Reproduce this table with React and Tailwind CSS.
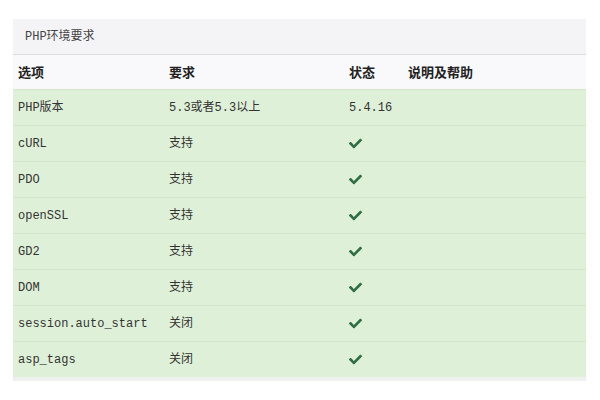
import React from "react";
import { FaCheck } from "react-icons/fa";

const rows = [
  ["PHP版本", "5.3或者5.3以上", "5.4.16"],
  ["cURL", "支持", true],
  ["PDO", "支持", true],
  ["openSSL", "支持", true],
  ["GD2", "支持", true],
  ["DOM", "支持", true],
  ["session.auto_start", "关闭", true],
  ["asp_tags", "关闭", true],
];

const font = { fontFamily: '"Liberation Mono", "Noto Sans CJK SC", monospace' };

export default function App() {
  return (
    <div className="w-[600px] h-[400px] bg-white pt-[19px] pl-[13px]" style={font}>
      <div className="w-[573px] text-[#333]">
        <div className="h-[36px] bg-[#f4f4f6] border-b border-[#dcdcde] flex items-center pl-[12px] text-[12px] text-[#444]">
          PHP环境要求
        </div>
        <div className="h-[34px] bg-[#f9f9fb] grid grid-cols-[151px_180px_59px_1fr] items-center text-[13px] font-bold text-[#222]" style={{ fontFamily: '"Noto Sans CJK SC", sans-serif' }}>
          <div className="pl-[5px]">选项</div>
          <div className="pl-[5px]">要求</div>
          <div className="pl-[5px]">状态</div>
          <div className="pl-[5px]">说明及帮助</div>
        </div>
        <div className="bg-[#dff0d8]">
          {rows.map((r, i) => (
            <div
              key={i}
              className="h-[36px] grid grid-cols-[151px_180px_59px_1fr] items-center text-[12px] text-[#333] border-t border-[#d3e6cb]"
            >
              <div className="pl-[5px] whitespace-nowrap">{r[0]}</div>
              <div className="pl-[5px] whitespace-nowrap">{r[1]}</div>
              <div className="pl-[5px] whitespace-nowrap">
                {r[2] === true ? (
                  <FaCheck className="text-[#2f6e42] w-[13px] h-[13px]" />
                ) : (
                  r[2]
                )}
              </div>
              <div></div>
            </div>
          ))}
        </div>
        <div className="h-[4px] bg-[#eef1ee]"></div>
      </div>
    </div>
  );
}
